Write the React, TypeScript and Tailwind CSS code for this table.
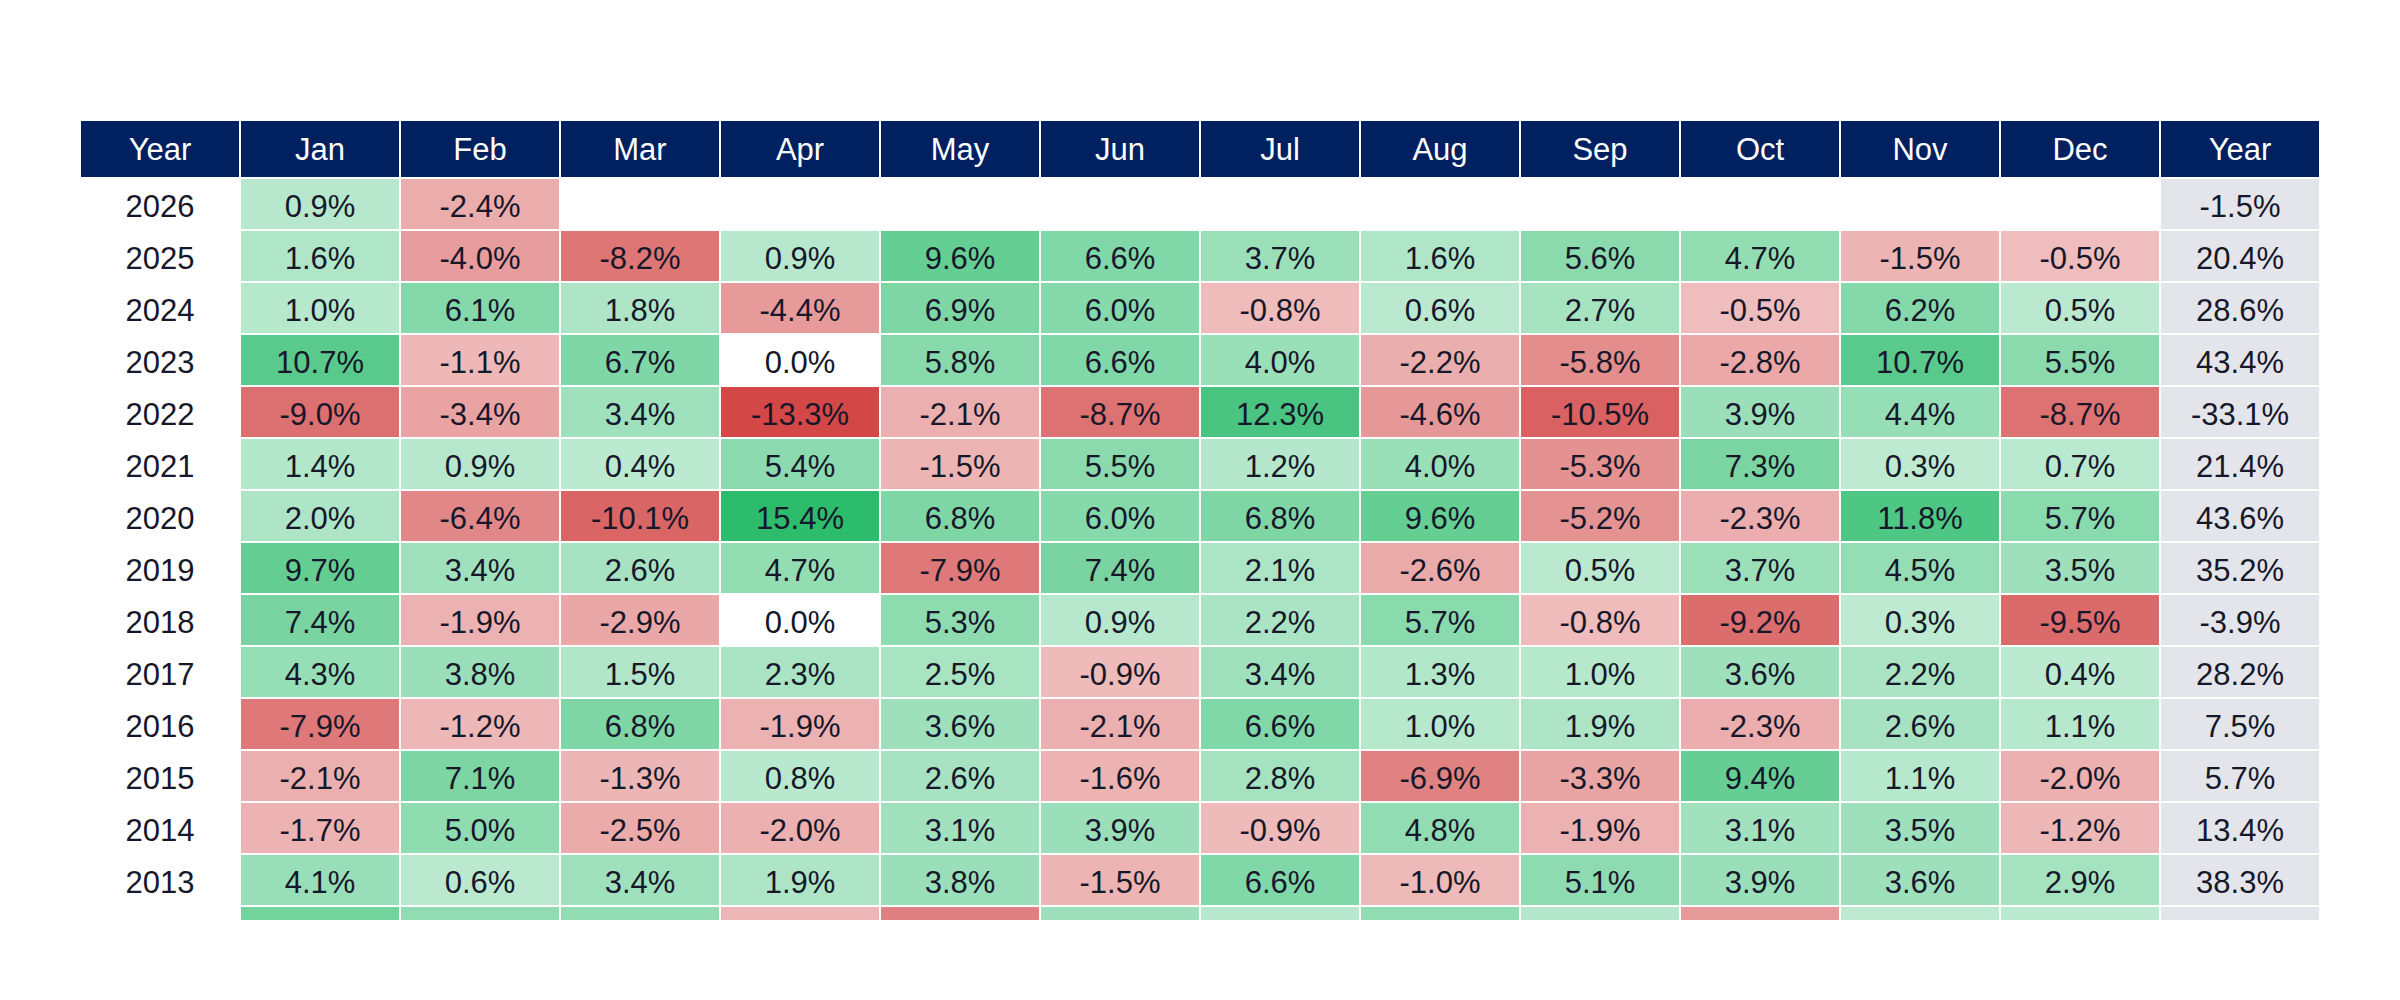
import React from 'react';

type Row = { year: number; months: (number | null)[]; total: number };

const MONTHS = ['Jan', 'Feb', 'Mar', 'Apr', 'May', 'Jun', 'Jul', 'Aug', 'Sep', 'Oct', 'Nov', 'Dec'];

const ROWS: Row[] = [
  { year: 2026, months: [0.9, -2.4, null, null, null, null, null, null, null, null, null, null], total: -1.5 },
  { year: 2025, months: [1.6, -4.0, -8.2, 0.9, 9.6, 6.6, 3.7, 1.6, 5.6, 4.7, -1.5, -0.5], total: 20.4 },
  { year: 2024, months: [1.0, 6.1, 1.8, -4.4, 6.9, 6.0, -0.8, 0.6, 2.7, -0.5, 6.2, 0.5], total: 28.6 },
  { year: 2023, months: [10.7, -1.1, 6.7, 0.0, 5.8, 6.6, 4.0, -2.2, -5.8, -2.8, 10.7, 5.5], total: 43.4 },
  { year: 2022, months: [-9.0, -3.4, 3.4, -13.3, -2.1, -8.7, 12.3, -4.6, -10.5, 3.9, 4.4, -8.7], total: -33.1 },
  { year: 2021, months: [1.4, 0.9, 0.4, 5.4, -1.5, 5.5, 1.2, 4.0, -5.3, 7.3, 0.3, 0.7], total: 21.4 },
  { year: 2020, months: [2.0, -6.4, -10.1, 15.4, 6.8, 6.0, 6.8, 9.6, -5.2, -2.3, 11.8, 5.7], total: 43.6 },
  { year: 2019, months: [9.7, 3.4, 2.6, 4.7, -7.9, 7.4, 2.1, -2.6, 0.5, 3.7, 4.5, 3.5], total: 35.2 },
  { year: 2018, months: [7.4, -1.9, -2.9, 0.0, 5.3, 0.9, 2.2, 5.7, -0.8, -9.2, 0.3, -9.5], total: -3.9 },
  { year: 2017, months: [4.3, 3.8, 1.5, 2.3, 2.5, -0.9, 3.4, 1.3, 1.0, 3.6, 2.2, 0.4], total: 28.2 },
  { year: 2016, months: [-7.9, -1.2, 6.8, -1.9, 3.6, -2.1, 6.6, 1.0, 1.9, -2.3, 2.6, 1.1], total: 7.5 },
  { year: 2015, months: [-2.1, 7.1, -1.3, 0.8, 2.6, -1.6, 2.8, -6.9, -3.3, 9.4, 1.1, -2.0], total: 5.7 },
  { year: 2014, months: [-1.7, 5.0, -2.5, -2.0, 3.1, 3.9, -0.9, 4.8, -1.9, 3.1, 3.5, -1.2], total: 13.4 },
  { year: 2013, months: [4.1, 0.6, 3.4, 1.9, 3.8, -1.5, 6.6, -1.0, 5.1, 3.9, 3.6, 2.9], total: 38.3 },
  { year: 2012, months: [8.0, 4.9, 4.6, -1.2, -7.2, 3.6, 0.9, 4.9, 1.2, -4.5, 0.3, 0.4], total: 16.8 },
];

const MAX = 15.4;

// green / red heat, lighter near zero
function cellColor(v: number | null): string {
  if (v === null || v === 0) return '#ffffff';
  const a = Math.min(1, 0.3 + (0.7 * Math.abs(v)) / MAX);
  const base = v > 0 ? [44, 188, 108] : [206, 52, 52];
  const mix = base.map((c) => Math.round(255 - (255 - c) * a));
  return `rgb(${mix[0]}, ${mix[1]}, ${mix[2]})`;
}

const fmt = (v: number) => `${v.toFixed(1)}%`;

const COLS = { gridTemplateColumns: 'repeat(14, 158px)' };

export default function App() {
  return (
    <div className="min-h-screen bg-white px-[81px] pt-[121px] font-['Liberation_Sans',Arial,sans-serif]">
      <div className="h-[799px] overflow-hidden">
        {/* Header */}
        <div className="grid gap-[2px]" style={COLS}>
          {['Year', ...MONTHS, 'Year'].map((h, i) => (
            <div
              key={`${h}-${i}`}
              className="flex h-[56px] items-center justify-center bg-[#00205f] pt-[3px] text-[31px] text-white"
            >
              {h}
            </div>
          ))}
        </div>

        {/* Body */}
        <div className="mt-[2px] flex flex-col gap-[2px]">
          {ROWS.map((row) => (
            <div key={row.year} className="grid gap-[2px]" style={COLS}>
              <div className="flex h-[50px] items-center justify-center bg-white pt-[6px] text-[31px] text-[#16182a]">
                {row.year}
              </div>
              {row.months.map((v, i) => (
                <div
                  key={i}
                  className="flex h-[50px] items-center justify-center pt-[6px] text-[31px] text-[#16182a]"
                  style={{ backgroundColor: cellColor(v) }}
                >
                  {v === null ? '' : fmt(v)}
                </div>
              ))}
              <div className="flex h-[50px] items-center justify-center bg-[#e4e5ea] pt-[6px] text-[31px] text-[#16182a]">
                {fmt(row.total)}
              </div>
            </div>
          ))}
        </div>
      </div>
    </div>
  );
}
